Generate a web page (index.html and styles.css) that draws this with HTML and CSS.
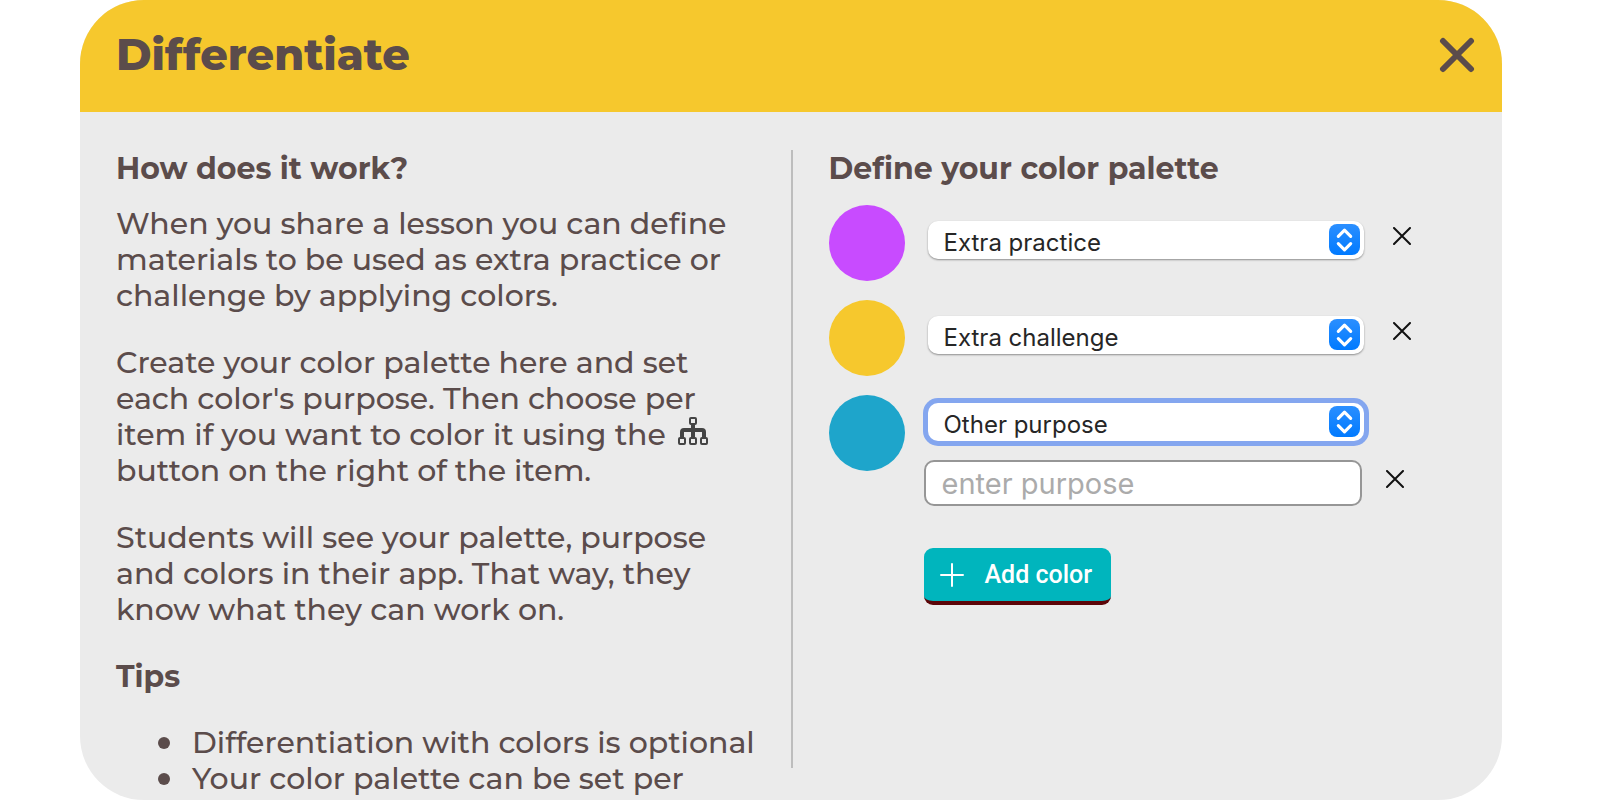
FILE: index.html
```html
<!DOCTYPE html>
<html lang="en">
<head>
  <meta charset="UTF-8">
  <title>Differentiate</title>
  <link rel="stylesheet" href="styles.css">
</head>
<body>

<div class="modal">
  <header class="modal-header">
    <h1>Differentiate</h1>
    <button class="close-btn" aria-label="Close">
      <svg viewBox="0 0 36 36"><path d="M4 4 L32 32 M32 4 L4 32"/></svg>
    </button>
  </header>

  <div class="modal-body">
    <!-- Explanation -->
    <section class="info">
      <h2>How does it work?</h2>
      <p>When you share a lesson you can define materials to be used as extra practice or challenge by applying colors.</p>
      <p>Create your color palette here and set<br>each color's purpose. Then choose per<br>item if you want to color it using the
        <svg class="tree-icon" viewBox="0 0 30 28">
          <path class="line" d="M15 7 V21 M4 21 V15 Q4 13 6 13 H24 Q26 13 26 15 V21"/>
          <rect x="12" y="1" width="6" height="6" rx="1"/>
          <rect x="1" y="21" width="6" height="6" rx="1"/>
          <rect x="12" y="21" width="6" height="6" rx="1"/>
          <rect x="23" y="21" width="6" height="6" rx="1"/>
        </svg><br>button on the right of the item.</p>
      <p>Students will see your palette, purpose<br>and colors in their app. That way, they<br>know what they can work on.</p>
      <h2 class="tips">Tips</h2>
      <ul>
        <li>Differentiation with colors is optional</li>
        <li>Your color palette can be set per</li>
      </ul>
    </section>

    <!-- Palette -->
    <section class="palette">
      <h2>Define your color palette</h2>

      <div class="color-row">
        <span class="swatch purple"></span>
        <div class="select-wrap">
          <select aria-label="Purpose of purple">
            <option selected>Extra practice</option>
            <option>Extra challenge</option>
            <option>Other purpose</option>
          </select>
          <svg class="stepper" viewBox="0 0 30 30"><path d="M9 12 L15 6 L21 12 M9 19 L15 25 L21 19"/></svg>
        </div>
        <button class="remove-btn" aria-label="Remove purple">
          <svg viewBox="0 0 18 18"><path d="M1 1 L17 17 M17 1 L1 17"/></svg>
        </button>
      </div>

      <div class="color-row">
        <span class="swatch yellow"></span>
        <div class="select-wrap">
          <select aria-label="Purpose of yellow">
            <option>Extra practice</option>
            <option selected>Extra challenge</option>
            <option>Other purpose</option>
          </select>
          <svg class="stepper" viewBox="0 0 30 30"><path d="M9 12 L15 6 L21 12 M9 19 L15 25 L21 19"/></svg>
        </div>
        <button class="remove-btn" aria-label="Remove yellow">
          <svg viewBox="0 0 18 18"><path d="M1 1 L17 17 M17 1 L1 17"/></svg>
        </button>
      </div>

      <div class="color-row custom">
        <span class="swatch blue"></span>
        <div class="select-wrap active">
          <select aria-label="Purpose of blue">
            <option>Extra practice</option>
            <option>Extra challenge</option>
            <option selected>Other purpose</option>
          </select>
          <svg class="stepper" viewBox="0 0 30 30"><path d="M9 12 L15 6 L21 12 M9 19 L15 25 L21 19"/></svg>
        </div>
        <div class="purpose">
          <input type="text" placeholder="enter purpose" aria-label="Custom purpose">
          <button class="remove-btn" aria-label="Remove blue">
            <svg viewBox="0 0 18 18"><path d="M1 1 L17 17 M17 1 L1 17"/></svg>
          </button>
        </div>
      </div>

      <button class="add-btn">
        <svg viewBox="0 0 24 24"><path d="M12 1 V23 M1 12 H23"/></svg>
        Add color
      </button>
    </section>
  </div>
</div>

</body>
</html>
```

FILE: styles.css
```css
* {
  box-sizing: border-box;
}

body {
  margin: 0;
  background-color: #fff;
  color: #5b4c4b;
  font-family: Montserrat, Inter, sans-serif;
}

button {
  border: none;
  background: transparent;
  padding: 0;
  cursor: pointer;
}

svg {
  display: block;
  fill: none;
  stroke: currentColor;
  stroke-linecap: round;
  stroke-linejoin: round;
}

.modal {
  display: flex;
  flex-direction: column;
  height: 100vh;
  margin: 0 98px 0 80px;
  border-radius: 64px;
  overflow: hidden;
  background-color: #ebebeb;
}

.modal-header {
  display: flex;
  justify-content: space-between;
  align-items: center;
  height: 112px;
  flex-shrink: 0;
  padding: 0 27px 2px 36px;
  background-color: #f6c82d;
}

h1 {
  margin: 0;
  font-size: 43px;
  font-weight: 800;
  line-height: 56px;
}

.close-btn {
  color: #5b4c4b;
}

.close-btn svg {
  width: 36px;
  height: 36px;
  stroke-width: 6;
}

.modal-body {
  display: grid;
  grid-template-columns: 1fr 1fr;
  grid-template-rows: minmax(0, 1fr);
  flex: 1;
  min-height: 0;
  padding: 38px 37px 32px 36px;
}

h2 {
  margin: 0;
  font-size: 30px;
  font-weight: 700;
  line-height: 36px;
}

.info {
  padding-top: 1px;
  font-size: 30px;
  font-weight: 500;
  line-height: 36px;
}

.info p {
  max-width: 640px;
  margin: 0 0 31px;
}

.info h2 {
  margin-bottom: 19px;
}

.info h2.tips {
  margin-bottom: 30px;
}

.info ul {
  margin: 0;
  padding-left: 42px;
  list-style: none;
}

.info li {
  display: flex;
  align-items: center;
  gap: 22px;
}

.info li::before {
  content: "";
  width: 12px;
  height: 12px;
  border-radius: 50%;
  background-color: currentColor;
}

.tree-icon {
  display: inline-block;
  width: 30px;
  height: 28px;
  margin-left: 4px;
  color: #444;
  stroke-width: 2;
}

.tree-icon .line {
  stroke-width: 4;
  stroke-linecap: butt;
}

.tree-icon rect {
  fill: #ebebeb;
}

.palette {
  padding: 1px 54px 0 36px;
  border-left: 2px solid #bdbdbd;
}

.palette h2 {
  margin-bottom: 18px;
}

.color-row {
  display: grid;
  grid-template-columns: 76px 1fr 18px;
  column-gap: 29px;
  align-items: start;
  margin-bottom: 19px;
}

.swatch {
  width: 76px;
  height: 76px;
  border-radius: 50%;
}

.purple { background-color: #c84bff; }
.yellow { background-color: #f6c82d; }
.blue { background-color: #1ea5cb; }

.select-wrap {
  display: grid;
  align-items: center;
  margin: 16px 0 0 -6px;
}

.select-wrap > * {
  grid-area: 1 / 1;
}

select {
  appearance: none;
  width: 100%;
  height: 38px;
  padding: 6px 44px 0 16px;
  border: none;
  border-radius: 10px;
  outline: none;
  background-color: #fff;
  box-shadow: 0 1px 2px rgba(0, 0, 0, 0.4);
  color: #262626;
  font-family: Inter, sans-serif;
  font-size: 24px;
  line-height: 32px;
}

.stepper {
  justify-self: end;
  width: 31px;
  height: 31px;
  margin: 0 4px 2px 0;
  border-radius: 8px;
  background: linear-gradient(#2b8fff, #007aff);
  color: #fff;
  stroke-width: 3;
  pointer-events: none;
}

.remove-btn {
  margin-top: 22px;
  color: #111;
}

.remove-btn svg {
  width: 18px;
  height: 18px;
  stroke-width: 2;
}

.custom {
  margin-bottom: 42px;
}

.custom .swatch {
  grid-row: 1 / 3;
}

.custom .select-wrap {
  margin-top: 8px;
}

.active select {
  box-shadow: 0 0 0 5px #84a6ef;
}

.purpose {
  display: flex;
  grid-column: 2 / 4;
  align-items: flex-start;
  gap: 24px;
  margin: 19px 7px 0 -10px;
}

.purpose input {
  flex: 1;
  min-width: 0;
  height: 46px;
  padding: 0 16px;
  border: 2px solid #969696;
  border-radius: 10px;
  background-color: #fff;
  font-family: Inter, sans-serif;
  font-size: 29px;
}

.purpose input::placeholder {
  color: #ababab;
}

.purpose .remove-btn {
  margin-top: 10px;
}

.add-btn {
  display: flex;
  align-items: center;
  gap: 21px;
  height: 57px;
  margin-left: 95px;
  padding: 0 19px 0 16px;
  border-bottom: 4px solid #5c0508;
  border-radius: 9px;
  background-color: #00b5bd;
  color: #fff;
  font-family: Roboto, sans-serif;
  font-size: 25px;
  font-weight: 500;
}

.add-btn svg {
  width: 24px;
  height: 24px;
  stroke-width: 2;
}
```
